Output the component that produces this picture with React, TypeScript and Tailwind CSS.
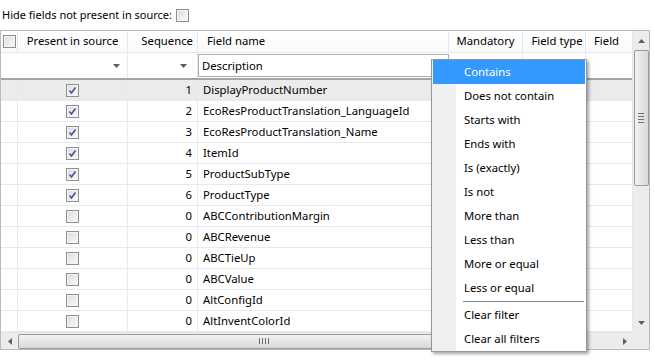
import React from "react";

const font = { fontFamily: '"Noto Sans", "Open Sans", sans-serif' };

function Check({ checked }: { checked?: boolean }) {
  return (
    <div className="relative w-[13px] h-[13px] border border-[#8e8f8f] bg-gradient-to-br from-[#dcdcdc] to-[#fbfbfb] shadow-[inset_0_0_0_1px_#f4f4f4]">
      {checked && (
        <svg className="absolute left-[1px] top-[1px]" width="9" height="9" viewBox="0 0 9 9">
          <path d="M1.5 4.5 L3.5 7 L7.5 1.5" stroke="#3c5896" strokeWidth="1.6" fill="none" />
        </svg>
      )}
    </div>
  );
}

function Arrow({ dir, color = "#5c5c5c" }: { dir: "up" | "down" | "left" | "right"; color?: string }) {
  const pts: Record<string, string> = {
    down: "0,0 7,0 3.5,4",
    up: "0,4 7,4 3.5,0",
    left: "4,0 4,7 0,3.5",
    right: "0,0 0,7 4,3.5",
  };
  const w = dir === "up" || dir === "down" ? 7 : 4;
  const h = dir === "up" || dir === "down" ? 4 : 7;
  return (
    <svg width={w} height={h} viewBox={`0 0 ${w} ${h}`}>
      <polygon points={pts[dir]} fill={color} />
    </svg>
  );
}

const rows: [boolean, number, string][] = [
  [true, 1, "DisplayProductNumber"],
  [true, 2, "EcoResProductTranslation_LanguageId"],
  [true, 3, "EcoResProductTranslation_Name"],
  [true, 4, "ItemId"],
  [true, 5, "ProductSubType"],
  [true, 6, "ProductType"],
  [false, 0, "ABCContributionMargin"],
  [false, 0, "ABCRevenue"],
  [false, 0, "ABCTieUp"],
  [false, 0, "ABCValue"],
  [false, 0, "AltConfigId"],
  [false, 0, "AltInventColorId"],
];

const menu = [
  "Contains",
  "Does not contain",
  "Starts with",
  "Ends with",
  "Is (exactly)",
  "Is not",
  "More than",
  "Less than",
  "More or equal",
  "Less or equal",
];

export default function App() {
  return (
    <div className="relative w-[654px] h-[363px] bg-white text-[11.3px] text-black overflow-hidden" style={font}>
      <div className="flex items-center h-[30px] pl-[2px] pt-[1px] gap-[4px] text-[11px]">
        <span>Hide fields not present in source:</span>
        <Check />
      </div>
      <div className="w-[650px] border border-[#b4bcc6] flex flex-col">
        <div className="flex">
          <div className="w-[632px] flex flex-col">
            {/* header */}
            <div className="flex h-[22px] border-b border-[#e3e8ee] bg-gradient-to-b from-white to-[#f9fafb] whitespace-nowrap">
              <div className="w-[17px] flex items-center justify-center border-r border-[#e3e8ee]">
                <Check />
              </div>
              <div className="w-[110px] flex items-center justify-center border-r border-[#e3e8ee]">Present in source</div>
              <div className="w-[70px] flex items-center justify-end pr-[4px] border-r border-[#e3e8ee]">Sequence</div>
              <div className="w-[251px] flex items-center pl-[9px] border-r border-[#e3e8ee]">Field name</div>
              <div className="w-[74px] flex items-center justify-center border-r border-[#e3e8ee]">Mandatory</div>
              <div className="w-[63px] flex items-center justify-center pl-[6px] border-r border-[#e3e8ee]">Field type</div>
              <div className="flex-1 flex items-center pl-[8px] overflow-hidden">Field</div>
            </div>
            {/* filter row */}
            <div className="flex h-[27px] border-b-2 border-[#a5a5a5]">
              <div className="w-[17px]" />
              <div className="w-[110px] flex items-center justify-end pr-[7px] border-r border-[#e3e8ee]">
                <Arrow dir="down" />
              </div>
              <div className="w-[70px] flex items-center justify-end pr-[10px] border-r border-[#e3e8ee]">
                <Arrow dir="down" />
              </div>
              <div className="w-[251px] flex items-center">
                <div className="w-[251px] h-[23px] border border-[#abadb3] flex items-center pl-[3px] pt-[1px]">Description</div>
              </div>
              <div className="w-[74px] border-r border-[#e3e8ee]" />
              <div className="w-[63px] border-r border-[#e3e8ee]" />
              <div className="flex-1" />
            </div>
            {/* data rows */}
            {rows.map(([c, n, name], i) => (
              <div key={i} className={`flex h-[21px] border-b border-[#e6eaee] ${i === 0 ? "bg-[#ebebeb]" : "bg-white"}`}>
                <div className="w-[17px] border-r border-[#e6eaee]" />
                <div className="w-[110px] flex items-center justify-center border-r border-[#e6eaee]">
                  <Check checked={c} />
                </div>
                <div className="w-[70px] flex items-center justify-end pr-[5px] pt-[1px] border-r border-[#e6eaee]">{n}</div>
                <div className="w-[251px] flex items-center pl-[5px] pt-[1px] border-r border-[#e6eaee] whitespace-nowrap">{name}</div>
                <div className="w-[74px] border-r border-[#e6eaee]" />
                <div className="w-[63px] border-r border-[#e6eaee]" />
                <div className="flex-1" />
              </div>
            ))}
          </div>
          {/* vertical scrollbar */}
          <div className="w-[17px] h-[301px] bg-[#ececec] border-l border-[#e6e6e6] flex flex-col items-center">
            <div className="h-[19px] flex items-center justify-center">
              <Arrow dir="up" color="#606060" />
            </div>
            <div className="w-[15px] h-[136px] rounded-[2px] border border-[#9a9a9a] bg-gradient-to-r from-[#f2f2f2] to-[#d9d9d9] flex items-center justify-center">
              <div className="flex flex-col gap-[2px]">
                <div className="w-[6px] h-[1px] bg-[#707070]" />
                <div className="w-[6px] h-[1px] bg-[#707070]" />
                <div className="w-[6px] h-[1px] bg-[#707070]" />
                <div className="w-[6px] h-[1px] bg-[#707070]" />
              </div>
            </div>
            <div className="flex-1" />
            <div className="h-[19px] flex items-center justify-center">
              <Arrow dir="down" color="#606060" />
            </div>
          </div>
        </div>
        {/* horizontal scrollbar */}
        <div className="flex h-[17px]">
          <div className="w-[632px] bg-[#ececec] flex items-center border-t border-[#e6e6e6]">
            <div className="w-[17px] flex items-center justify-center">
              <Arrow dir="left" color="#606060" />
            </div>
            <div className="w-[491px] h-[15px] rounded-[2px] border border-[#9a9a9a] bg-gradient-to-b from-[#f2f2f2] to-[#d9d9d9] flex items-center justify-center">
              <div className="flex gap-[2px]">
                <div className="w-[1px] h-[6px] bg-[#707070]" />
                <div className="w-[1px] h-[6px] bg-[#707070]" />
                <div className="w-[1px] h-[6px] bg-[#707070]" />
                <div className="w-[1px] h-[6px] bg-[#707070]" />
              </div>
            </div>
            <div className="flex-1" />
            <div className="w-[17px] flex items-center justify-center">
              <Arrow dir="right" color="#606060" />
            </div>
          </div>
          <div className="flex-1 bg-[#ececec]" />
        </div>
      </div>

      {/* context menu */}
      <div className="absolute left-[431px] top-[59px] w-[156px] border border-[#979797] bg-white shadow-[2px_2px_3px_rgba(0,0,0,0.35)] flex flex-col">
        <div className="absolute left-0 top-0 bottom-0 w-[24px] bg-[#f0f0f0]" />
        {menu.map((m, i) => (
          <div
            key={m}
            className={`relative h-[24px] flex items-center pl-[31px] mx-[1px] whitespace-nowrap ${i === 0 ? "bg-[#3399ff] text-white" : ""}`}
          >
            {m}
          </div>
        ))}
        <div className="relative h-[3px] flex items-center pl-[31px] pr-[2px]">
          <div className="h-[1px] flex-1 bg-[#7a8a9a]" />
        </div>
        <div className="relative h-[24px] flex items-center pl-[32px]">Clear filter</div>
        <div className="relative h-[24px] flex items-center pl-[32px]">Clear all filters</div>
      </div>
    </div>
  );
}
